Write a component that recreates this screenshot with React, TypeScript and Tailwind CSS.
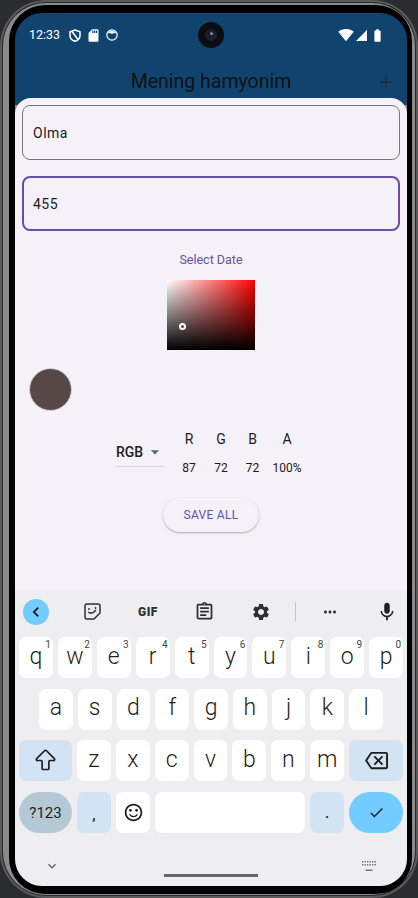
import React from 'react';
import {
  MdSettings, MdMic, MdSignalWifi4Bar, MdSignalCellular4Bar, MdBatteryFull, MdSdCard, MdChevronLeft,
  MdMoreHoriz, MdOutlineAssignment, MdOutlineBackspace, MdOutlineSentimentSatisfied,
  MdCheck, MdKeyboardArrowDown, MdArrowDropDown,
} from 'react-icons/md';
import { Plus, ArrowBigUp } from 'lucide-react';

const rowOne = [['q', '1'], ['w', '2'], ['e', '3'], ['r', '4'], ['t', '5'], ['y', '6'], ['u', '7'], ['i', '8'], ['o', '9'], ['p', '0']];
const rowTwo = ['a', 's', 'd', 'f', 'g', 'h', 'j', 'k', 'l'];
const rowThree = ['z', 'x', 'c', 'v', 'b', 'n', 'm'];
const channels = [
  { label: 'R', value: '87', width: 'w-[32px]' },
  { label: 'G', value: '72', width: 'w-[32px]' },
  { label: 'B', value: '72', width: 'w-[31px]' },
  { label: 'A', value: '100%', width: 'w-[38px]' },
];

const Key: React.FC<{ label: string; sup?: string }> = ({ label, sup }) => (
  <div className="relative flex h-full flex-1 items-center justify-center rounded-[7px] bg-white pb-[1px] text-[23px] font-light text-[#1f1f1f]">
    {label}
    {sup && <span className="absolute right-[2px] top-[1px] text-[10px] font-normal leading-[14px] text-[#444]">{sup}</span>}
  </div>
);

const StatusBar = () => (
  <div className="relative flex h-[44px] shrink-0 items-center text-white">
    <span className="ml-[14px] text-[12.5px]">12:33</span>
    <svg className="ml-[9px]" width="12" height="13" viewBox="0 0 12 13" fill="none" stroke="white" strokeWidth="1.5">
      <path d="M6 1 L11 2.8 V6.5 C11 9.5 8.8 11.5 6 12.3 C3.2 11.5 1 9.5 1 6.5 V2.8 Z" />
      <path d="M3 2.5 L9 10.5" />
    </svg>
    <MdSdCard className="ml-[5px]" size={15} />
    <svg className="ml-[5px]" width="12" height="12" viewBox="0 0 12 12">
      <circle cx="6" cy="6" r="5.2" fill="none" stroke="white" strokeWidth="1.2" />
      <path d="M1.5 4.5 A5 5 0 0 1 10.5 4.5 Q8.5 3.2 6 5 Q3.5 3.2 1.5 4.5 Z" fill="white" />
    </svg>
    <div className="absolute left-[183px] top-[9px] flex h-[26px] w-[26px] items-center justify-center rounded-full bg-[#0b0d12]">
      <div className="relative h-[12px] w-[12px] rounded-full bg-[#1c1e2a]">
        <div className="absolute left-[5px] top-[3px] h-[3px] w-[3px] rounded-full bg-[#8a7fb0]" />
      </div>
    </div>
    <div className="ml-auto mr-[22px] flex items-center">
      <MdSignalWifi4Bar size={16} />
      <MdSignalCellular4Bar size={13} className="ml-[1px]" />
      <MdBatteryFull size={15} className="ml-[2px]" />
    </div>
  </div>
);

const Field: React.FC<{ value: string; focused?: boolean }> = ({ value, focused }) => (
  <div
    className={`flex h-[55px] items-center rounded-[8px] pt-[2px] text-[14px] tracking-[0.5px] text-[#1d1b20] ${
      focused ? 'border-2 border-[#6750a4] pl-[9px]' : 'border border-[#79747e] pl-[10px]'
    }`}
  >
    {value}
  </div>
);

const Keyboard = () => (
  <div className="flex h-[296px] shrink-0 flex-col bg-[#eeeef1]">
    <div className="relative flex h-[47px] shrink-0 items-center pb-[4px] text-[#2f2f33]">
      <div className="ml-[8px] flex h-[26px] w-[26px] items-center justify-center rounded-full bg-[#72ccff]">
        <MdChevronLeft size={20} className="text-[#111]" />
      </div>
      <svg className="ml-[35px]" width="17" height="17" viewBox="0 0 17 17" fill="none" stroke="#2f2f33" strokeWidth="1.5">
        <path d="M3 1 H14 A2 2 0 0 1 16 3 V10 L10 16 H3 A2 2 0 0 1 1 14 V3 A2 2 0 0 1 3 1 Z" />
        <path d="M4 9 Q8 12 12 7" />
        <circle cx="5" cy="6" r="0.9" fill="#2f2f33" stroke="none" />
        <circle cx="11.5" cy="5" r="0.9" fill="#2f2f33" stroke="none" />
      </svg>
      <span className="ml-[35px] w-[24px] text-center text-[12px] font-black leading-none tracking-[0.5px]">GIF</span>
      <MdOutlineAssignment size={21} className="ml-[34px]" />
      <MdSettings size={20} className="ml-[36px]" />
      <div className="ml-[24px] h-[19px] w-px bg-[#c6c6ca]" />
      <MdMoreHoriz size={18} className="ml-[25px]" />
      <MdMic size={22} className="ml-[37px] text-[#222]" />
    </div>
    <div className="flex flex-col gap-[10.67px] px-[4px]">
      <div className="flex h-[41px] gap-[5px]">
        {rowOne.map(([k, n]) => <Key key={k} label={k} sup={n} />)}
      </div>
      <div className="flex h-[41px] gap-[5px] px-[20px]">
        {rowTwo.map((k) => <Key key={k} label={k} />)}
      </div>
      <div className="flex h-[41px] gap-[5px]">
        <div className="flex w-[53px] items-center justify-center rounded-[7px] bg-[#d2e4f3]">
          <ArrowBigUp size={27} strokeWidth={1.5} className="text-[#1f1f1f]" />
        </div>
        {rowThree.map((k) => <Key key={k} label={k} />)}
        <div className="flex w-[54px] items-center justify-center rounded-[7px] bg-[#d2e4f3]">
          <MdOutlineBackspace size={23} className="text-[#1f1f1f]" />
        </div>
      </div>
      <div className="flex h-[41px] gap-[5px] text-[#1f1f1f]">
        <div className="flex w-[53px] items-center justify-center rounded-full bg-[#b4c9d6] pt-[1px] text-[15px]">?123</div>
        <div className="flex w-[34px] items-end justify-center rounded-[7px] bg-[#d2e4f3] pb-[10px] text-[15px] font-medium leading-none">,</div>
        <div className="flex w-[34px] items-center justify-center rounded-[7px] bg-white">
          <MdOutlineSentimentSatisfied size={21} />
        </div>
        <div className="w-[150px] rounded-[7px] bg-white" />
        <div className="flex w-[34px] items-end justify-center rounded-[7px] bg-[#d2e4f3] pb-[12px] text-[15px] font-medium leading-none">.</div>
        <div className="flex w-[54px] items-center justify-center rounded-full bg-[#72ccff]">
          <MdCheck size={17} />
        </div>
      </div>
    </div>
    <div className="relative mt-auto flex h-[53px] items-center justify-between pl-[29px] pr-[31px] pt-[12px] text-[#666]">
      <MdKeyboardArrowDown size={16} />
      <svg width="14" height="10" viewBox="0 0 14 10" fill="#777">
        <path d="M0 0h1.4v1.4H0zM2.5 0h1.4v1.4H2.5zM5 0h1.4v1.4H5zM7.5 0h1.4v1.4H7.5zM10 0h1.4v1.4H10zM12.5 0h1.4v1.4h-1.4zM0 3h1.4v1.4H0zM2.5 3h1.4v1.4H2.5zM5 3h1.4v1.4H5zM7.5 3h1.4v1.4H7.5zM10 3h1.4v1.4H10zM12.5 3h1.4v1.4h-1.4zM3.5 8.5h7V10h-7z" />
      </svg>
      <div className="absolute bottom-[9px] left-[149px] h-[3px] w-[94px] bg-[#666]" />
    </div>
  </div>
);

export default function App() {
  return (
    <div className="h-[898px] w-[418px] overflow-hidden bg-[#2b2c30] font-['Roboto',sans-serif]">
      <div className="h-full w-full rounded-[46px] bg-[#5a5a5a] p-[2px]">
        <div className="h-full w-full rounded-[44px] bg-[#2a2a2a] p-[1px]">
          <div className="h-full w-full rounded-[43px] bg-[#8a8a8a] pb-[1px] pl-[6px] pr-[3px] pt-[2px]">
            <div className="h-full w-full rounded-[36px] bg-black pb-[8px] pl-[6px] pr-[5px] pt-[8px]">
              <div className="flex h-full w-full flex-col overflow-hidden rounded-[27px] bg-[#10446f]">
                <StatusBar />
                <div className="relative flex h-[41px] shrink-0 items-center justify-center text-[19.5px] text-[#111]">
                  <span className="relative top-[4px]">Mening hamyonim</span>
                  <Plus size={18} strokeWidth={1.3} className="absolute right-[12px] top-[16px] text-[#222]" />
                </div>
                <div className="flex min-h-0 flex-1 flex-col bg-[linear-gradient(#10446f_7px,#8a8a8a_7px)]">
                  <div className="flex-1 rounded-t-[16px] bg-[#f5f1f8] px-[7px] pt-[7px]">
                    <Field value="Olma" />
                    <div className="mt-[16px]"><Field value="455" focused /></div>
                    <div className="mt-[18px] pt-[1px] text-center text-[12.5px] font-[450] leading-[19px] text-[#6750a4]">Select Date</div>
                    <div className="relative mx-auto mt-[11px] h-[70px] w-[88px] bg-[linear-gradient(to_top,#000,transparent),linear-gradient(to_right,#fff,#f00)]">
                      <div className="absolute left-[12px] top-[43px] h-[7px] w-[7px] rounded-full border-2 border-white" />
                    </div>
                    <div className="ml-[6.5px] mt-[18px] h-[43px] w-[43px] rounded-full border border-[#dcd6dc] bg-[#574848]" />
                    <div className="mt-[19px] flex h-[48px] justify-center">
                      <div className="relative mr-[8px] h-[37px] w-[49px] border-b border-[#ddd8e0] pt-[12px] text-[14px] font-medium leading-[20px] text-[#1d1b20]">
                        RGB
                        <MdArrowDropDown size={20} className="absolute right-[0px] top-[12px] text-[#666]" />
                      </div>
                      {channels.map((c) => (
                        <div key={c.label} className={`flex flex-col items-center justify-between ${c.width}`}>
                          <span className="text-[14px] leading-[18px] text-[#1d1b20]">{c.label}</span>
                          <span className="text-[12px] leading-[20px] text-[#1d1b20]">{c.value}</span>
                        </div>
                      ))}
                    </div>
                    <div className="mt-[20px] flex justify-center">
                      <div className="flex h-[34px] w-[96px] items-center justify-center rounded-full bg-[#f5f1f8] text-[12px] font-[450] tracking-[0.3px] text-[#6750a4] shadow-[0_1px_2px_rgba(0,0,0,0.3)]">
                        SAVE ALL
                      </div>
                    </div>
                  </div>
                </div>
                <Keyboard />
              </div>
            </div>
          </div>
        </div>
      </div>
    </div>
  );
}
